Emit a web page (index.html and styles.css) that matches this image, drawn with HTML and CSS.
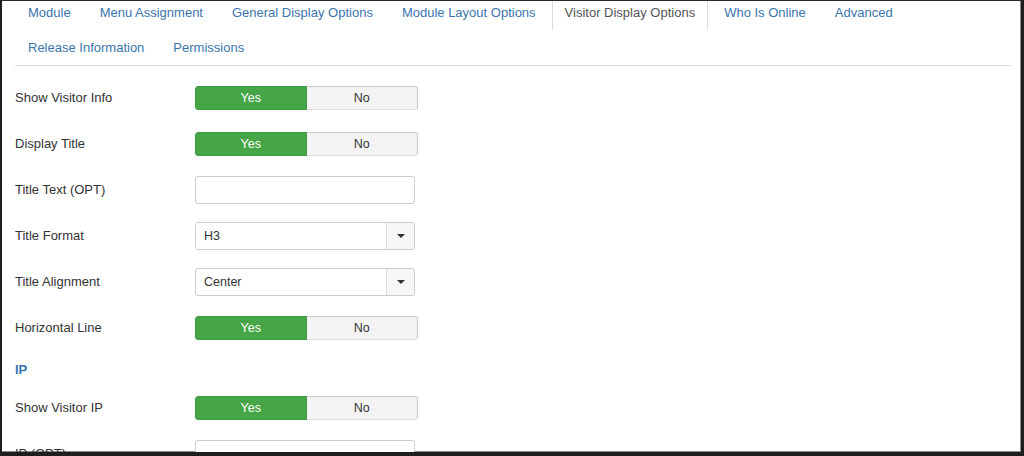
FILE: index.html
```html
<!DOCTYPE html>
<html lang="en">

<head>
    <meta charset="UTF-8">
    <meta name="viewport" content="width=device-width, initial-scale=1.0">
    <title>Visitor Display Options</title>
    <link rel="stylesheet" href="styles.css">
</head>

<body>
    <div class="frame">
        <ul class="nav-tabs">
            <li><a href="#">Module</a></li>
            <li><a href="#">Menu Assignment</a></li>
            <li><a href="#">General Display Options</a></li>
            <li><a href="#">Module Layout Options</a></li>
            <li class="active"><a href="#">Visitor Display Options</a></li>
            <li><a href="#">Who Is Online</a></li>
            <li><a href="#">Advanced</a></li>
            <li><a href="#">Release Information</a></li>
            <li><a href="#">Permissions</a></li>
        </ul>

        <div class="tab-content">
            <div class="control-group">
                <div class="control-label">Show Visitor Info</div>
                <div class="controls">
                    <div class="toggle"><span class="yes">Yes</span><span class="no">No</span></div>
                </div>
            </div>
            <div class="control-group">
                <div class="control-label">Display Title</div>
                <div class="controls">
                    <div class="toggle"><span class="yes">Yes</span><span class="no">No</span></div>
                </div>
            </div>
            <div class="control-group">
                <div class="control-label">Title Text (OPT)</div>
                <div class="controls">
                    <div class="text-input"></div>
                </div>
            </div>
            <div class="control-group">
                <div class="control-label">Title Format</div>
                <div class="controls">
                    <div class="select"><span class="select-value">H3</span><span class="select-arrow"><i class="caret"></i></span></div>
                </div>
            </div>
            <div class="control-group">
                <div class="control-label">Title Alignment</div>
                <div class="controls">
                    <div class="select"><span class="select-value">Center</span><span class="select-arrow"><i class="caret"></i></span></div>
                </div>
            </div>
            <div class="control-group">
                <div class="control-label">Horizontal Line</div>
                <div class="controls">
                    <div class="toggle"><span class="yes">Yes</span><span class="no">No</span></div>
                </div>
            </div>

            <h3 class="section-title">IP</h3>

            <div class="control-group">
                <div class="control-label">Show Visitor IP</div>
                <div class="controls">
                    <div class="toggle"><span class="yes">Yes</span><span class="no">No</span></div>
                </div>
            </div>
            <div class="control-group">
                <div class="control-label">IP (OPT)</div>
                <div class="controls">
                    <div class="text-input"></div>
                </div>
            </div>
        </div>
    </div>
</body>

</html>
```

FILE: styles.css
```css
body {
    margin: 0;
    font-family: "Liberation Sans", Arial, sans-serif;
    color: #333;
    background: #fff;
}

.frame {
    box-sizing: border-box;
    height: 456px;
    overflow: hidden;
    border-top: 1px solid #2a2a2a;
    border-left: 2px solid #1e1e1e;
    border-right: 3px solid #1e1e1e;
    border-bottom: 4px solid #1e1e1e;
    box-shadow: inset -1px -1px 0 #8a8a8a;
    padding: 0 10px 0 13px;
}

/* tabs */
.nav-tabs {
    display: flex;
    flex-wrap: wrap;
    list-style: none;
    margin: -6px 0 0;
    padding: 0;
    border-bottom: 1px solid #ddd;
}

.nav-tabs li {
    margin-right: 3px;
}

.nav-tabs a {
    display: block;
    padding: 8px 12px 7px;
    line-height: 18px;
    font-size: 13px;
    color: #3a75ad;
    text-decoration: none;
    border: 1px solid transparent;
    border-radius: 4px 4px 0 0;
}

.nav-tabs .active a {
    color: #555;
    border-color: #ddd #ddd transparent;
    background: #fff;
}

/* form */
.tab-content {
    padding-top: 18px;
}

.control-group {
    display: flex;
    align-items: center;
    height: 28px;
    margin-bottom: 18px;
}

.control-label {
    width: 180px;
    font-size: 13px;
    line-height: 18px;
}

.controls {
    display: flex;
    align-items: center;
}

.toggle {
    display: flex;
    width: 223px;
    height: 24px;
    font-size: 12.5px;
    line-height: 22px;
    text-align: center;
}

.toggle .yes {
    width: 111px;
    background: #46a546;
    color: #fff;
    border: 1px solid #409a40;
    border-radius: 3px 0 0 3px;
}

.toggle .no {
    width: 112px;
    background: #f3f3f3;
    color: #333;
    border: 1px solid #c9c9c9;
    border-left: none;
    border-bottom-style: dotted;
    border-radius: 0 3px 3px 0;
}

.text-input {
    box-sizing: border-box;
    width: 220px;
    height: 28px;
    border: 1px solid #ccc;
    border-radius: 3px;
    background: #fff;
}

.select {
    box-sizing: border-box;
    display: flex;
    width: 220px;
    height: 28px;
    border: 1px solid #ccc;
    border-radius: 3px;
    background: #fff;
    font-size: 12.5px;
    line-height: 26px;
}

.select-value {
    flex: 1;
    padding-left: 8px;
}

.select-arrow {
    display: flex;
    align-items: center;
    justify-content: center;
    width: 27px;
    border-left: 1px solid #ddd;
    background: #f7f7f7;
    border-radius: 0 3px 3px 0;
}

.caret {
    width: 0;
    height: 0;
    border-left: 4px solid transparent;
    border-right: 4px solid transparent;
    border-top: 4px solid #333;
}

.section-title {
    margin: 0 0 16px;
    padding-top: 1px;
    font-size: 13px;
    line-height: 17px;
    font-weight: bold;
    color: #3a75ad;
}
```
